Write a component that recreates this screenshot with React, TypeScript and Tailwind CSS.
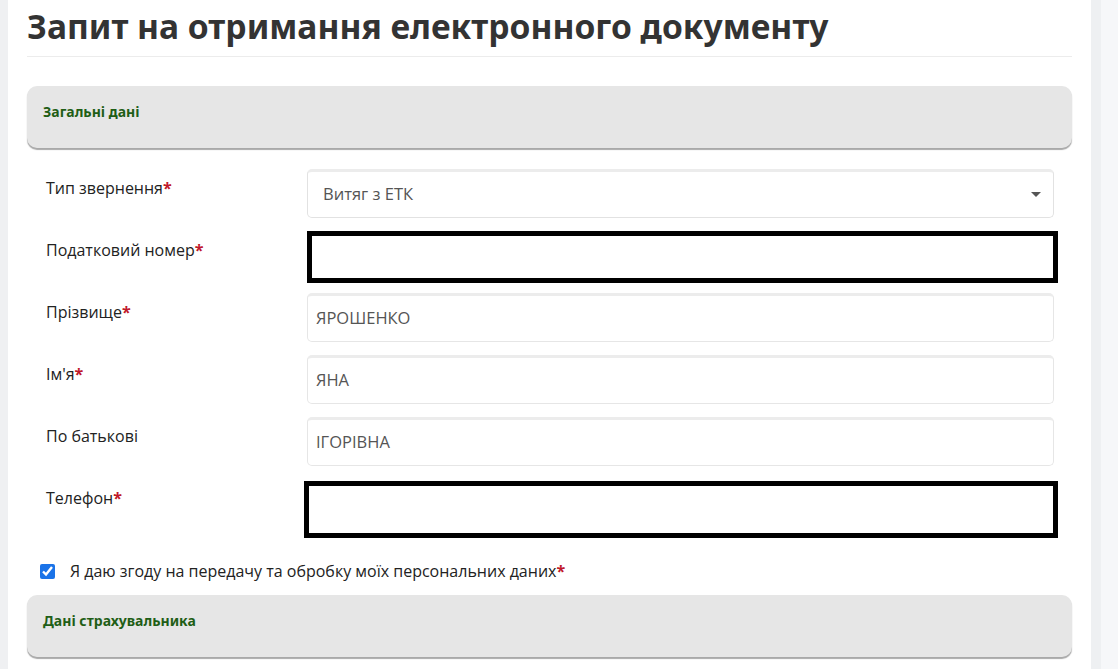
import React from 'react'

const fields = [
  { label: 'Тип звернення', required: true, kind: 'select', value: 'Витяг з ЕТК' },
  { label: 'Податковий номер', required: true, kind: 'hidden', value: '' },
  { label: 'Прізвище', required: true, kind: 'text', value: 'ЯРОШЕНКО' },
  { label: "Ім'я", required: true, kind: 'text', value: 'ЯНА' },
  { label: 'По батькові', required: false, kind: 'text', value: 'ІГОРІВНА' },
  { label: 'Телефон', required: true, kind: 'hidden', value: '' },
]

function SectionHeader({ title }: { title: string }) {
  return (
    <div className="h-[62px] rounded-[10px] bg-[#e6e6e6] shadow-[0_2px_1px_#a9a9a9] px-4 pt-[13px]">
      <span className="text-[14px] font-bold text-[#1f5e16] font-['Noto_Sans',sans-serif]">{title}</span>
    </div>
  )
}

export default function App() {
  return (
    <div className="flex h-[669px] w-[1118px] overflow-hidden bg-white font-['Open_Sans',sans-serif]">
      <div className="w-[8px] shrink-0 bg-[#eff0f2]" />
      <div className="flex-1 px-[19px]">
        {/* Title */}
        <h1 className="pt-[4px] pb-[8px] text-[33.6px] leading-[44px] font-bold text-[#333] font-['Noto_Sans',sans-serif] border-b border-[#ececec]">
          Запит на отримання електронного документу
        </h1>

        <div className="mt-[29px]">
          <SectionHeader title="Загальні дані" />
        </div>

        {/* Form rows */}
        <div className="mt-[21px] flex flex-col gap-[13px] pl-[19px] pr-[18px]">
          {fields.map((f, i) => (
            <div key={i} className="flex h-[49px] items-start">
              <div className="w-[261px] shrink-0 pt-[7px] text-[16px] text-[#222]">
                {f.label}
                {f.required && <span className="font-bold text-[#c0182a]">*</span>}
              </div>
              {f.kind === 'select' && (
                <div className="flex h-[49px] flex-1 items-center justify-between rounded-[5px] border border-[#e2e2e2] border-t-[3px] border-t-[#ececec] bg-white pl-[15px] pr-[12px] text-[16.5px] text-[#555]">
                  <span>{f.value}</span>
                  <svg width="10" height="6" viewBox="0 0 10 6">
                    <path d="M0 0 L10 0 L5 5 Z" fill="#555" />
                  </svg>
                </div>
              )}
              {f.kind === 'text' && (
                <div className="flex h-[49px] flex-1 items-center rounded-[5px] border border-[#e6e6e6] border-t-[3px] border-t-[#ececec] bg-white pl-[8px] text-[16.5px] text-[#555]">
                  {f.value}
                </div>
              )}
              {f.kind === 'hidden' && (
                <div
                  className={
                    i === 1
                      ? 'h-[52px] flex-1 -mr-[4px] border-[5px] border-black bg-white'
                      : 'mt-[2px] h-[57px] flex-1 -ml-[3px] -mr-[4px] border-[5px] border-black bg-white'
                  }
                />
              )}
            </div>
          ))}
        </div>

        {/* Consent */}
        <label className="mt-[31px] flex items-center gap-[15px] pl-[13px] text-[16px] text-[#222]">
          <input type="checkbox" defaultChecked className="h-[15px] w-[15px] accent-[#1a73e8]" />
          <span>
            Я даю згоду на передачу та обробку моїх персональних даних
            <span className="font-bold text-[#c0182a]">*</span>
          </span>
        </label>

        <div className="mt-[12px]">
          <SectionHeader title="Дані страхувальника" />
        </div>
      </div>
      <div className="flex w-[27px] shrink-0">
        <div className="w-[10px] bg-[#eef0f2]" />
        <div className="flex-1 bg-[#f6f7f9]" />
      </div>
    </div>
  )
}
